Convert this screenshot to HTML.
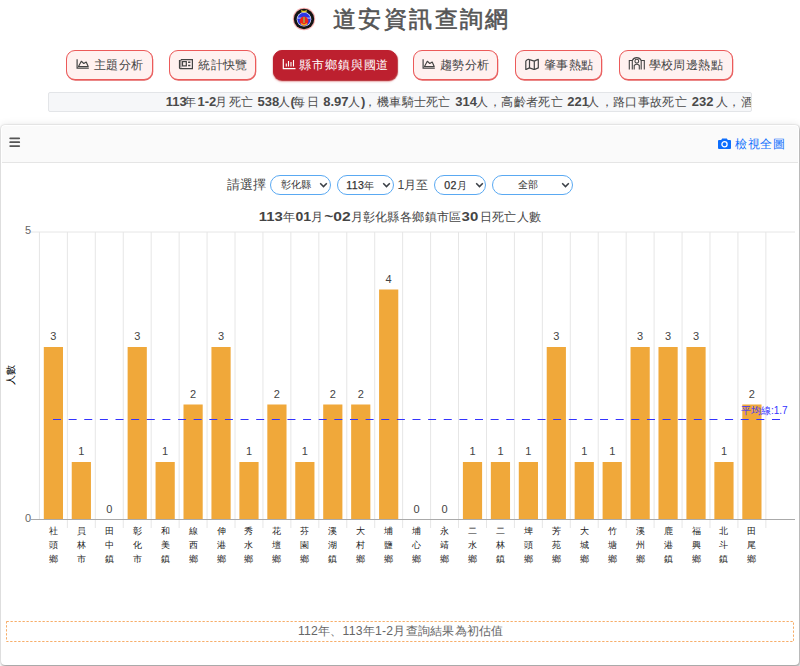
<!DOCTYPE html>
<html><head><meta charset="utf-8">
<style>
*{box-sizing:border-box;margin:0;padding:0}
html,body{width:800px;height:666px;overflow:hidden;background:#fff;font-family:"Liberation Sans",sans-serif;color:#333}
.abs{position:absolute}
#title{position:absolute;left:333px;top:4px;font-size:23px;letter-spacing:2.4px;font-weight:400;-webkit-text-stroke:0.6px #555;color:#555;line-height:normal;white-space:nowrap}
.btn{position:absolute;top:50px;height:30px;border:1px solid #ec5a5a;border-radius:9px;background:#fff1f0;box-shadow:0.3px 0.7px 0.6px rgba(215,30,30,.7);font-size:12.3px;color:#444;line-height:28px;white-space:nowrap}
.btn.act{background:#bd202f;border-color:#bd202f;color:#fff;box-shadow:0.5px 1px 1px rgba(170,10,20,.8),0 1.5px 2px rgba(200,40,40,.3)}
.btn svg{position:absolute;top:8px}
.btn span{position:absolute;top:0}
#marq{position:absolute;left:48px;top:92px;width:704px;height:20px;background:#f6f7f9;border:1px solid #e3e5e8;overflow:hidden;white-space:nowrap;font-size:13px;line-height:18px;color:#4a4a4a;border-radius:2px}
#marq b{font-weight:bold;font-size:13px}
#marq span{font-size:12.4px;letter-spacing:0.3px}
#card{position:absolute;left:1px;top:125px;width:798px;height:540px;border-radius:4px;background:#fff;box-shadow:0 0 2px rgba(0,0,0,.2),0 0 8px rgba(0,0,0,.1),1px 2px 3px rgba(0,0,0,.3)}
#chead{position:absolute;left:1px;top:1px;right:1px;height:37px;background:#fafafa;border-bottom:1px solid #e5e5e5;border-radius:3px 3px 0 0}
.sel{position:absolute;top:175px;height:20px;border:1.5px solid #5aa9f2;border-radius:10px;background:#fff}
.dg{font-size:10.6px;letter-spacing:0.4px;-webkit-text-stroke:0.25px #333}
.stx{position:absolute;top:176.7px;font-size:9.9px;line-height:16px;color:#333;white-space:nowrap}
.lbl{position:absolute;top:176.5px;font-size:12.3px;line-height:17px;color:#444;white-space:nowrap}
#note{position:absolute;left:6px;top:621px;width:788px;height:21px;font-size:12.2px;letter-spacing:0.25px;padding-left:1.5px;color:#666;text-align:center;line-height:21px}
svg text{font-family:"Liberation Sans",sans-serif}
.dl{font-size:11px;fill:#444;text-anchor:middle}
.xl{font-size:9.4px;fill:#222;text-anchor:middle}
.avg{font-size:10px;fill:#3333ff}
.yl{font-size:11px;fill:#666;text-anchor:end}
.yt{font-size:10px;fill:#000;text-anchor:middle}
.ct{font-size:12.4px;fill:#444;letter-spacing:0.4px}
.ct.b{letter-spacing:0}
.ct.b{font-size:12.8px;font-weight:bold}
</style></head><body>
<svg class="abs" style="left:292px;top:6.5px" width="24" height="24" viewBox="0 0 24 24">
<circle cx="12" cy="12" r="11.2" fill="#f6b0b0"/>
<circle cx="12" cy="12" r="10.2" fill="#141414"/>
<circle cx="12" cy="12.3" r="7.3" fill="#dfe3ff"/>
<circle cx="12" cy="12.3" r="6.6" fill="#2a36e8"/>
<rect x="5.5" y="10.6" width="13" height="1" fill="#c8d0ff"/>
<circle cx="12" cy="14" r="4.4" fill="#f02418"/>
<path d="M9 16.5Q12 19.5 15 16.5" stroke="#f7b020" stroke-width="1.6" fill="none"/>
<rect x="11" y="10" width="2" height="6" fill="#b08a40"/>
<path d="M9.2 3.6Q12 5.6 14.8 3.6" stroke="#e0c828" stroke-width="1.6" fill="none"/>
</svg>
<div id="title">道安資訊查詢網</div>

<div class="btn" style="left:66px;width:87px">
<svg style="left:9px;top:7px" width="14" height="11" viewBox="0 0 14 11" fill="none" stroke="#444"><path d="M1.1 1.3V10.1H12.8" stroke-width="1.2"/><path d="M2.5 8.5L5.3 3.3 7.8 5.5 10.2 4 12.2 8.5Z" stroke-width="1.15" stroke-linejoin="round"/></svg>
<span style="left:26.8px;letter-spacing:0.5px">主題分析</span></div>
<div class="btn" style="left:169px;width:87px">
<svg style="left:8px;top:7px" width="16" height="12" viewBox="0 0 16 12" fill="none" stroke="#444" stroke-width="1.2"><path d="M2.9 1.6H14.4V10.6H2.4Q1.5 10.6 1.5 9.7V2.7H2.6"/><path d="M2.9 1.6V9.7" stroke-width="0.8"/><rect x="4.5" y="3.6" width="3.8" height="4.3"/><path d="M10.1 4.3H12.4M10.1 7.5H12.4" stroke-width="1.4"/></svg>
<span style="left:28.2px;letter-spacing:0.4px">統計快覽</span></div>
<div class="btn act" style="left:273px;width:124px">
<svg style="left:8px;top:7px" width="14" height="12" viewBox="0 0 14 12" fill="none" stroke="#fff"><path d="M1.3 1V10.7H13.5" stroke-width="1.2"/><path d="M4.3 5.5V8.6M6.5 3V8.6M9 4V8.6M11.5 2V8.6" stroke-width="1.1"/></svg>
<span style="left:25.3px;letter-spacing:0.85px">縣市鄉鎮與國道</span></div>
<div class="btn" style="left:413px;width:85px">
<svg style="left:8px;top:7px" width="14" height="11" viewBox="0 0 14 11" fill="none" stroke="#444"><path d="M1.1 1.3V10.1H12.8" stroke-width="1.2"/><path d="M2.5 8.5L5.3 3.3 7.8 5.5 10.2 4 12.2 8.5Z" stroke-width="1.15" stroke-linejoin="round"/></svg>
<span style="left:26px;letter-spacing:0.4px">趨勢分析</span></div>
<div class="btn" style="left:515px;width:87px">
<svg style="left:8px;top:3px" width="16" height="16" viewBox="0 0 16 16" fill="none" stroke="#444" stroke-width="1.2" stroke-linejoin="round"><path d="M1.8 7.1Q3.5 4.9 5.5 5.6 L10.3 7.1 Q12.3 6.1 14.3 5.4V13.9L10.3 15.6 5.5 13.9 1.8 15.6Z M5.5 5.6V13.9M10.3 7.1V15.6"/></svg>
<span style="left:28px;letter-spacing:0.4px">肇事熱點</span></div>
<div class="btn" style="left:619px;width:114px">
<svg style="left:8px;top:4px" width="18" height="15" viewBox="0 0 18 15" fill="none" stroke="#444" stroke-width="1.1"><path d="M1.3 14.5V5.5H4.3V14.5M13.2 14.5V5.5H16.3V14.5M4.3 5.5A4.9 4.9 0 0 1 13.2 5.5M6.2 14.5V10.5Q8.8 8 11.3 10.5V14.5"/><circle cx="8.8" cy="6.2" r="1.9"/></svg>
<span style="left:28.6px;letter-spacing:0.4px">學校周邊熱點</span></div>

<div id="marq"><b id="m0" style="position:absolute;left:116.65px;top:0">113</b><span id="m1" style="position:absolute;left:134.67px;top:0">年</span><b id="m2" style="position:absolute;left:148.50px;top:0">1-2</b><span id="m3" style="position:absolute;left:165.83px;top:0">月</span><span id="m4" style="position:absolute;left:179.95px;top:0">死亡</span><b id="m5" style="position:absolute;left:208.50px;top:0">538</b><span id="m6" style="position:absolute;left:229.33px;top:0">人</span><b id="m7" style="position:absolute;left:241.50px;top:0">(</b><span id="m8" style="position:absolute;left:244.39px;top:0">每</span><span id="m9" style="position:absolute;left:258.28px;top:0">日</span><b id="m10" style="position:absolute;left:274.26px;top:0">8.97</b><span id="m11" style="position:absolute;left:298.73px;top:0">人</span><b id="m12" style="position:absolute;left:311.97px;top:0">)</b><span id="m13" style="position:absolute;left:314.52px;top:0">，</span><span id="m14" style="position:absolute;left:328.00px;top:0">機車騎士死亡</span><b id="m15" style="position:absolute;left:406.19px;top:0">314</b><span id="m16" style="position:absolute;left:427.33px;top:0">人</span><span id="m17" style="position:absolute;left:439.52px;top:0">，</span><span id="m18" style="position:absolute;left:452.45px;top:0">高齡者死亡</span><b id="m19" style="position:absolute;left:518.26px;top:0">221</b><span id="m20" style="position:absolute;left:538.33px;top:0">人</span><span id="m21" style="position:absolute;left:551.52px;top:0">，</span><span id="m22" style="position:absolute;left:564.17px;top:0">路口事故死亡</span><b id="m23" style="position:absolute;left:642.81px;top:0">232</b><span id="m24" style="position:absolute;left:667.33px;top:0">人</span><span id="m25" style="position:absolute;left:678.52px;top:0">，</span><span id="m26" style="position:absolute;left:692.03px;top:0">酒駕</span></div>

<div id="card"><div id="chead"></div></div>
<svg class="abs" style="left:8px;top:136px" width="14" height="12" viewBox="0 0 14 12"><path d="M2.2 2.3h9M2.2 6.2h9M2.2 10.1h9" stroke="#555" stroke-width="1.8" stroke-linecap="round"/></svg>
<svg class="abs" style="left:718px;top:138px" width="13" height="11" viewBox="0 0 13 11"><path d="M4.2 0.5h4.6l1 1.6h2.2a1 1 0 0 1 1 1V10a1 1 0 0 1-1 1H1a1 1 0 0 1-1-1V3.1a1 1 0 0 1 1-1h2.2z" fill="#0d6efd"/><circle cx="6.5" cy="6.3" r="2.6" fill="none" stroke="#fff" stroke-width="1.3"/></svg>
<div class="abs" style="left:735px;top:136px;font-size:12px;letter-spacing:0.6px;color:#0d6efd;line-height:17px">檢視全圖</div>

<div class="lbl" style="left:227.3px;font-size:12.6px;letter-spacing:0px">請選擇</div>
<div class="sel" style="left:270px;width:61px"></div>
<div class="stx" style="left:280.6px">彰化縣</div>
<svg class="abs" style="left:319px;top:182px" width="9" height="7" viewBox="0 0 9 7"><path d="M1.2 1.3l3.3 3.3 3.3-3.3" stroke="#3a3f46" stroke-width="1.5" fill="none"/></svg>
<div class="sel" style="left:337px;width:57px"></div>
<div class="stx" style="left:346.3px"><span class="dg">113</span>年</div>
<svg class="abs" style="left:382.4px;top:182px" width="9" height="7" viewBox="0 0 9 7"><path d="M1.2 1.3l3.3 3.3 3.3-3.3" stroke="#3a3f46" stroke-width="1.5" fill="none"/></svg>
<div class="lbl" style="left:397.6px">1月至</div>
<div class="sel" style="left:434px;width:52px"></div>
<div class="stx" style="left:444.3px"><span class="dg">02</span>月</div>
<svg class="abs" style="left:474.5px;top:182px" width="9" height="7" viewBox="0 0 9 7"><path d="M1.2 1.3l3.3 3.3 3.3-3.3" stroke="#3a3f46" stroke-width="1.5" fill="none"/></svg>
<div class="sel" style="left:492px;width:81px"></div>
<div class="stx" style="left:517.6px">全部</div>
<svg class="abs" style="left:561px;top:182px" width="9" height="7" viewBox="0 0 9 7"><path d="M1.2 1.3l3.3 3.3 3.3-3.3" stroke="#3a3f46" stroke-width="1.5" fill="none"/></svg>

<svg class="abs" style="left:0;top:0" width="800" height="666" viewBox="0 0 800 666">
<line x1="39.43" y1="232" x2="39.43" y2="519" stroke="#e6e6e6"/>
<line x1="67.37" y1="232" x2="67.37" y2="519" stroke="#e6e6e6"/>
<line x1="95.31" y1="232" x2="95.31" y2="519" stroke="#e6e6e6"/>
<line x1="123.25" y1="232" x2="123.25" y2="519" stroke="#e6e6e6"/>
<line x1="151.19" y1="232" x2="151.19" y2="519" stroke="#e6e6e6"/>
<line x1="179.13" y1="232" x2="179.13" y2="519" stroke="#e6e6e6"/>
<line x1="207.07" y1="232" x2="207.07" y2="519" stroke="#e6e6e6"/>
<line x1="235.01" y1="232" x2="235.01" y2="519" stroke="#e6e6e6"/>
<line x1="262.95" y1="232" x2="262.95" y2="519" stroke="#e6e6e6"/>
<line x1="290.89" y1="232" x2="290.89" y2="519" stroke="#e6e6e6"/>
<line x1="318.83" y1="232" x2="318.83" y2="519" stroke="#e6e6e6"/>
<line x1="346.77" y1="232" x2="346.77" y2="519" stroke="#e6e6e6"/>
<line x1="374.71" y1="232" x2="374.71" y2="519" stroke="#e6e6e6"/>
<line x1="402.65" y1="232" x2="402.65" y2="519" stroke="#e6e6e6"/>
<line x1="430.59" y1="232" x2="430.59" y2="519" stroke="#e6e6e6"/>
<line x1="458.53" y1="232" x2="458.53" y2="519" stroke="#e6e6e6"/>
<line x1="486.47" y1="232" x2="486.47" y2="519" stroke="#e6e6e6"/>
<line x1="514.41" y1="232" x2="514.41" y2="519" stroke="#e6e6e6"/>
<line x1="542.35" y1="232" x2="542.35" y2="519" stroke="#e6e6e6"/>
<line x1="570.29" y1="232" x2="570.29" y2="519" stroke="#e6e6e6"/>
<line x1="598.23" y1="232" x2="598.23" y2="519" stroke="#e6e6e6"/>
<line x1="626.17" y1="232" x2="626.17" y2="519" stroke="#e6e6e6"/>
<line x1="654.11" y1="232" x2="654.11" y2="519" stroke="#e6e6e6"/>
<line x1="682.05" y1="232" x2="682.05" y2="519" stroke="#e6e6e6"/>
<line x1="709.99" y1="232" x2="709.99" y2="519" stroke="#e6e6e6"/>
<line x1="737.93" y1="232" x2="737.93" y2="519" stroke="#e6e6e6"/>
<line x1="765.87" y1="232" x2="765.87" y2="519" stroke="#e6e6e6"/>
<line x1="67.37" y1="519" x2="67.37" y2="528" stroke="#e6e6e6"/>
<line x1="95.31" y1="519" x2="95.31" y2="528" stroke="#e6e6e6"/>
<line x1="123.25" y1="519" x2="123.25" y2="528" stroke="#e6e6e6"/>
<line x1="151.19" y1="519" x2="151.19" y2="528" stroke="#e6e6e6"/>
<line x1="179.13" y1="519" x2="179.13" y2="528" stroke="#e6e6e6"/>
<line x1="207.07" y1="519" x2="207.07" y2="528" stroke="#e6e6e6"/>
<line x1="235.01" y1="519" x2="235.01" y2="528" stroke="#e6e6e6"/>
<line x1="262.95" y1="519" x2="262.95" y2="528" stroke="#e6e6e6"/>
<line x1="290.89" y1="519" x2="290.89" y2="528" stroke="#e6e6e6"/>
<line x1="318.83" y1="519" x2="318.83" y2="528" stroke="#e6e6e6"/>
<line x1="346.77" y1="519" x2="346.77" y2="528" stroke="#e6e6e6"/>
<line x1="374.71" y1="519" x2="374.71" y2="528" stroke="#e6e6e6"/>
<line x1="402.65" y1="519" x2="402.65" y2="528" stroke="#e6e6e6"/>
<line x1="430.59" y1="519" x2="430.59" y2="528" stroke="#e6e6e6"/>
<line x1="458.53" y1="519" x2="458.53" y2="528" stroke="#e6e6e6"/>
<line x1="486.47" y1="519" x2="486.47" y2="528" stroke="#e6e6e6"/>
<line x1="514.41" y1="519" x2="514.41" y2="528" stroke="#e6e6e6"/>
<line x1="542.35" y1="519" x2="542.35" y2="528" stroke="#e6e6e6"/>
<line x1="570.29" y1="519" x2="570.29" y2="528" stroke="#e6e6e6"/>
<line x1="598.23" y1="519" x2="598.23" y2="528" stroke="#e6e6e6"/>
<line x1="626.17" y1="519" x2="626.17" y2="528" stroke="#e6e6e6"/>
<line x1="654.11" y1="519" x2="654.11" y2="528" stroke="#e6e6e6"/>
<line x1="682.05" y1="519" x2="682.05" y2="528" stroke="#e6e6e6"/>
<line x1="709.99" y1="519" x2="709.99" y2="528" stroke="#e6e6e6"/>
<line x1="737.93" y1="519" x2="737.93" y2="528" stroke="#e6e6e6"/>
<line x1="765.87" y1="519" x2="765.87" y2="528" stroke="#e6e6e6"/>
<line x1="31" y1="232" x2="795" y2="232" stroke="#e6e6e6"/>
<rect x="43.80" y="347.00" width="19.2" height="172.50" fill="#f0a83a"/>
<text x="53.40" y="340.00" class="dl">3</text>
<text x="53.40" y="534.20" class="xl">社</text>
<text x="53.40" y="548.20" class="xl">頭</text>
<text x="53.40" y="562.20" class="xl">鄉</text>
<rect x="71.74" y="462.00" width="19.2" height="57.50" fill="#f0a83a"/>
<text x="81.34" y="455.00" class="dl">1</text>
<text x="81.34" y="534.20" class="xl">員</text>
<text x="81.34" y="548.20" class="xl">林</text>
<text x="81.34" y="562.20" class="xl">市</text>
<text x="109.28" y="512.50" class="dl">0</text>
<text x="109.28" y="534.20" class="xl">田</text>
<text x="109.28" y="548.20" class="xl">中</text>
<text x="109.28" y="562.20" class="xl">鎮</text>
<rect x="127.62" y="347.00" width="19.2" height="172.50" fill="#f0a83a"/>
<text x="137.22" y="340.00" class="dl">3</text>
<text x="137.22" y="534.20" class="xl">彰</text>
<text x="137.22" y="548.20" class="xl">化</text>
<text x="137.22" y="562.20" class="xl">市</text>
<rect x="155.56" y="462.00" width="19.2" height="57.50" fill="#f0a83a"/>
<text x="165.16" y="455.00" class="dl">1</text>
<text x="165.16" y="534.20" class="xl">和</text>
<text x="165.16" y="548.20" class="xl">美</text>
<text x="165.16" y="562.20" class="xl">鎮</text>
<rect x="183.50" y="404.50" width="19.2" height="115.00" fill="#f0a83a"/>
<text x="193.10" y="397.50" class="dl">2</text>
<text x="193.10" y="534.20" class="xl">線</text>
<text x="193.10" y="548.20" class="xl">西</text>
<text x="193.10" y="562.20" class="xl">鄉</text>
<rect x="211.44" y="347.00" width="19.2" height="172.50" fill="#f0a83a"/>
<text x="221.04" y="340.00" class="dl">3</text>
<text x="221.04" y="534.20" class="xl">伸</text>
<text x="221.04" y="548.20" class="xl">港</text>
<text x="221.04" y="562.20" class="xl">鄉</text>
<rect x="239.38" y="462.00" width="19.2" height="57.50" fill="#f0a83a"/>
<text x="248.98" y="455.00" class="dl">1</text>
<text x="248.98" y="534.20" class="xl">秀</text>
<text x="248.98" y="548.20" class="xl">水</text>
<text x="248.98" y="562.20" class="xl">鄉</text>
<rect x="267.32" y="404.50" width="19.2" height="115.00" fill="#f0a83a"/>
<text x="276.92" y="397.50" class="dl">2</text>
<text x="276.92" y="534.20" class="xl">花</text>
<text x="276.92" y="548.20" class="xl">壇</text>
<text x="276.92" y="562.20" class="xl">鄉</text>
<rect x="295.26" y="462.00" width="19.2" height="57.50" fill="#f0a83a"/>
<text x="304.86" y="455.00" class="dl">1</text>
<text x="304.86" y="534.20" class="xl">芬</text>
<text x="304.86" y="548.20" class="xl">園</text>
<text x="304.86" y="562.20" class="xl">鄉</text>
<rect x="323.20" y="404.50" width="19.2" height="115.00" fill="#f0a83a"/>
<text x="332.80" y="397.50" class="dl">2</text>
<text x="332.80" y="534.20" class="xl">溪</text>
<text x="332.80" y="548.20" class="xl">湖</text>
<text x="332.80" y="562.20" class="xl">鎮</text>
<rect x="351.14" y="404.50" width="19.2" height="115.00" fill="#f0a83a"/>
<text x="360.74" y="397.50" class="dl">2</text>
<text x="360.74" y="534.20" class="xl">大</text>
<text x="360.74" y="548.20" class="xl">村</text>
<text x="360.74" y="562.20" class="xl">鄉</text>
<rect x="379.08" y="289.50" width="19.2" height="230.00" fill="#f0a83a"/>
<text x="388.68" y="282.50" class="dl">4</text>
<text x="388.68" y="534.20" class="xl">埔</text>
<text x="388.68" y="548.20" class="xl">鹽</text>
<text x="388.68" y="562.20" class="xl">鄉</text>
<text x="416.62" y="512.50" class="dl">0</text>
<text x="416.62" y="534.20" class="xl">埔</text>
<text x="416.62" y="548.20" class="xl">心</text>
<text x="416.62" y="562.20" class="xl">鄉</text>
<text x="444.56" y="512.50" class="dl">0</text>
<text x="444.56" y="534.20" class="xl">永</text>
<text x="444.56" y="548.20" class="xl">靖</text>
<text x="444.56" y="562.20" class="xl">鄉</text>
<rect x="462.90" y="462.00" width="19.2" height="57.50" fill="#f0a83a"/>
<text x="472.50" y="455.00" class="dl">1</text>
<text x="472.50" y="534.20" class="xl">二</text>
<text x="472.50" y="548.20" class="xl">水</text>
<text x="472.50" y="562.20" class="xl">鄉</text>
<rect x="490.84" y="462.00" width="19.2" height="57.50" fill="#f0a83a"/>
<text x="500.44" y="455.00" class="dl">1</text>
<text x="500.44" y="534.20" class="xl">二</text>
<text x="500.44" y="548.20" class="xl">林</text>
<text x="500.44" y="562.20" class="xl">鎮</text>
<rect x="518.78" y="462.00" width="19.2" height="57.50" fill="#f0a83a"/>
<text x="528.38" y="455.00" class="dl">1</text>
<text x="528.38" y="534.20" class="xl">埤</text>
<text x="528.38" y="548.20" class="xl">頭</text>
<text x="528.38" y="562.20" class="xl">鄉</text>
<rect x="546.72" y="347.00" width="19.2" height="172.50" fill="#f0a83a"/>
<text x="556.32" y="340.00" class="dl">3</text>
<text x="556.32" y="534.20" class="xl">芳</text>
<text x="556.32" y="548.20" class="xl">苑</text>
<text x="556.32" y="562.20" class="xl">鄉</text>
<rect x="574.66" y="462.00" width="19.2" height="57.50" fill="#f0a83a"/>
<text x="584.26" y="455.00" class="dl">1</text>
<text x="584.26" y="534.20" class="xl">大</text>
<text x="584.26" y="548.20" class="xl">城</text>
<text x="584.26" y="562.20" class="xl">鄉</text>
<rect x="602.60" y="462.00" width="19.2" height="57.50" fill="#f0a83a"/>
<text x="612.20" y="455.00" class="dl">1</text>
<text x="612.20" y="534.20" class="xl">竹</text>
<text x="612.20" y="548.20" class="xl">塘</text>
<text x="612.20" y="562.20" class="xl">鄉</text>
<rect x="630.54" y="347.00" width="19.2" height="172.50" fill="#f0a83a"/>
<text x="640.14" y="340.00" class="dl">3</text>
<text x="640.14" y="534.20" class="xl">溪</text>
<text x="640.14" y="548.20" class="xl">州</text>
<text x="640.14" y="562.20" class="xl">鄉</text>
<rect x="658.48" y="347.00" width="19.2" height="172.50" fill="#f0a83a"/>
<text x="668.08" y="340.00" class="dl">3</text>
<text x="668.08" y="534.20" class="xl">鹿</text>
<text x="668.08" y="548.20" class="xl">港</text>
<text x="668.08" y="562.20" class="xl">鎮</text>
<rect x="686.42" y="347.00" width="19.2" height="172.50" fill="#f0a83a"/>
<text x="696.02" y="340.00" class="dl">3</text>
<text x="696.02" y="534.20" class="xl">福</text>
<text x="696.02" y="548.20" class="xl">興</text>
<text x="696.02" y="562.20" class="xl">鄉</text>
<rect x="714.36" y="462.00" width="19.2" height="57.50" fill="#f0a83a"/>
<text x="723.96" y="455.00" class="dl">1</text>
<text x="723.96" y="534.20" class="xl">北</text>
<text x="723.96" y="548.20" class="xl">斗</text>
<text x="723.96" y="562.20" class="xl">鎮</text>
<rect x="742.30" y="404.50" width="19.2" height="115.00" fill="#f0a83a"/>
<text x="751.90" y="397.50" class="dl">2</text>
<text x="751.90" y="534.20" class="xl">田</text>
<text x="751.90" y="548.20" class="xl">尾</text>
<text x="751.90" y="562.20" class="xl">鄉</text>
<line x1="31" y1="519.5" x2="795" y2="519.5" stroke="#aaa"/>
<line x1="53" y1="419.5" x2="781" y2="419.5" stroke="#3333ff" stroke-dasharray="8 7.63"/>
<text x="741" y="414" class="avg">平均線:1.7</text>
<text x="31" y="234.3" class="yl">5</text>
<text x="31" y="522" class="yl">0</text>
<text transform="translate(13.5,375) rotate(-90)" class="yt">人數</text>
<text x="258.7" y="220.6" class="ct b" textLength="24" lengthAdjust="spacingAndGlyphs">113</text>
<text x="283.2" y="220.6" class="ct">年</text>
<text x="295.4" y="220.6" class="ct b" textLength="15.6" lengthAdjust="spacingAndGlyphs">01</text>
<text x="311" y="220.6" class="ct">月</text>
<text x="324.2" y="220.6" class="ct b" textLength="26.5" lengthAdjust="spacingAndGlyphs">~02</text>
<text x="350.6" y="220.6" class="ct">月</text>
<text x="362.6" y="220.6" class="ct">彰化縣各鄉鎮市區</text>
<text x="461.6" y="220.6" class="ct b" textLength="16.6" lengthAdjust="spacingAndGlyphs">30</text>
<text x="479.5" y="220.6" class="ct">日死亡人數</text>
</svg>

<svg class="abs" style="left:6px;top:621px" width="788" height="21"><rect x="0.5" y="0.5" width="787" height="20" fill="none" stroke="#f7ad68" stroke-dasharray="2.3 1.7"/></svg>
<div id="note">112年、113年1-2月查詢結果為初估值</div>
</body></html>
